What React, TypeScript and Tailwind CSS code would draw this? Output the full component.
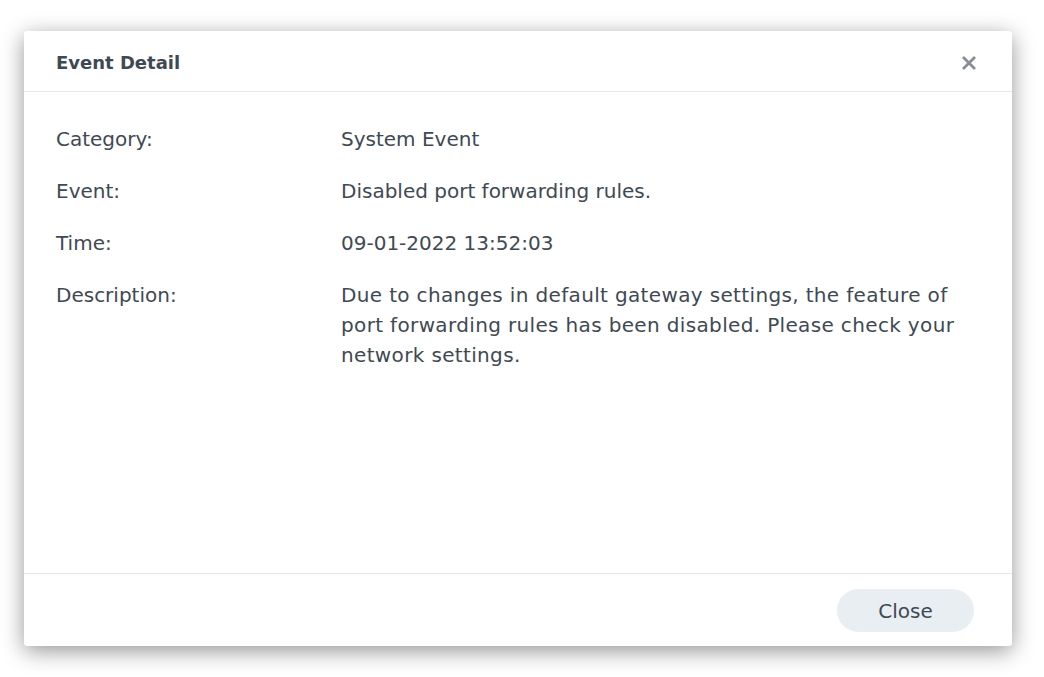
import React from "react";

const rows: { label: string; value: string; wide?: boolean }[] = [
  { label: "Category:", value: "System Event" },
  { label: "Event:", value: "Disabled port forwarding rules." },
  { label: "Time:", value: "09-01-2022 13:52:03" },
  {
    label: "Description:",
    value:
      "Due to changes in default gateway settings, the feature of port forwarding rules has been disabled. Please check your network settings.",
    wide: true,
  },
];

export default function App() {
  return (
    <div
      className="w-[1044px] h-[677px] bg-white pt-[31px] pl-[24px] overflow-hidden"
      style={{ fontFamily: '"DejaVu Sans", Verdana, sans-serif' }}
    >
      <div className="w-[988px] h-[615px] bg-white rounded-[3px] shadow-[0_5px_22px_rgba(0,0,0,0.42)] flex flex-col">
        <div className="h-[61px] shrink-0 border-b border-[#e3e8ee] flex items-center justify-between pl-[32px] pr-[35px] pt-[3px]">
          <div className="text-[18px] font-bold text-[#3f4953] leading-none">Event Detail</div>
          <svg width="16" height="16" viewBox="0 0 16 16" className="text-[#858e98]">
            <path d="M2 2 L14 14 M14 2 L2 14" stroke="currentColor" strokeWidth="2.8" strokeLinecap="butt" />
          </svg>
        </div>
        <div className="flex-1 pt-[32px] pl-[32px] pr-[40px] flex flex-col gap-[22px] text-[20px] leading-[30px] text-[#3f4953]">
          {rows.map((r) => (
            <div key={r.label} className="flex">
              <div className="w-[285px] shrink-0">{r.label}</div>
              <div className={r.wide ? "w-[625px] tracking-[0.35px]" : "w-[625px]"}>{r.value}</div>
            </div>
          ))}
        </div>
        <div className="h-[73px] shrink-0 border-t border-[#e3e8ee] flex items-center justify-end pr-[38px] pt-[1px]">
          <button className="w-[137px] h-[43px] rounded-full bg-[#e9eef3] text-[20px] text-[#3f4953] leading-none">
            Close
          </button>
        </div>
      </div>
    </div>
  );
}
